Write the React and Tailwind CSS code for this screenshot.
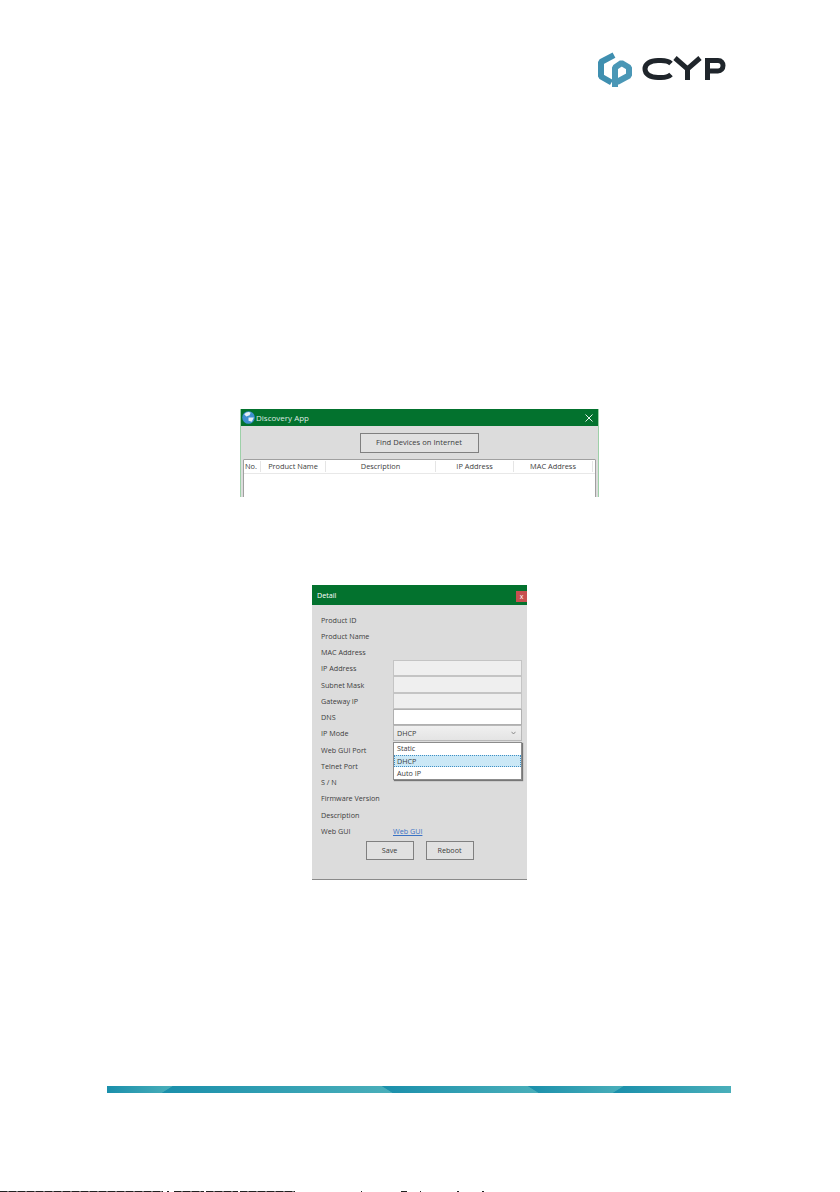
import React from 'react';

const labels = [
  'Product ID',
  'Product Name',
  'MAC Address',
  'IP Address',
  'Subnet Mask',
  'Gateway IP',
  'DNS',
  'IP Mode',
  'Web GUI Port',
  'Telnet Port',
  'S / N',
  'Firmware Version',
  'Description',
];

// [gap before, width] of the dark runs in the last row
const noise = [
  [0, 163],
  [4, 2],
  [5, 30],
  [2, 32],
  [2, 55],
  [66, 1],
  [39, 6],
  [13, 1],
  [36, 2],
  [23, 2],
];

const Logo = () => (
  <svg width="130" height="36" viewBox="0 0 130 36" fill="none">
    <path d="M16 3.2 L3 10 V24.5 L13.5 30.5" stroke="#3f8fb0" strokeWidth="6" strokeLinejoin="bevel" />
    <path d="M17 35 V15.5 L23.5 11 L31 15.5 V23.5 L19 30" stroke="#4a97b6" strokeWidth="6" strokeLinejoin="bevel" />
    <path
      d="M73 11.5 Q70 8.5 63 8.5 H60 C52 8.5 47 12 47 17 C47 22 52 25.5 60 25.5 H63 Q70 25.5 73 22.5"
      stroke="#1f252b"
      strokeWidth="5"
    />
    <path d="M77 6 L89.5 17 L102 6 M89.5 16 V28" stroke="#1f252b" strokeWidth="5" />
    <path d="M109.5 28 V8.5 H120 C123.5 8.5 125 11 125 13.5 C125 16.5 123 19 120 19 H112" stroke="#1f252b" strokeWidth="5" />
  </svg>
);

const Globe = () => (
  <svg width="13" height="13" viewBox="0 0 12 12">
    <circle cx="6" cy="6" r="5.8" fill="#3f8fd0" />
    <path d="M2 3 Q5 0 8 1.5 L7 4 L4 5 Z M6 6 L11 6 L9 10 L6 9 Z" fill="#e4eef5" />
  </svg>
);

const FooterBar = () => (
  <svg width="624" height="7" viewBox="0 0 624 7" className="block">
    <defs>
      <linearGradient id="a">
        <stop offset="0" stopColor="#1a8fab" />
        <stop offset="1" stopColor="#4aafba" />
      </linearGradient>
    </defs>
    <rect width="624" height="7" fill="#1a8fab" />
    <polygon points="0,0 66,0 55,7 0,7" fill="url(#a)" />
    <polygon points="66,0 275,0 286,7 55,7" fill="url(#a)" />
    <polygon points="275,0 421,0 432,7 286,7" fill="url(#a)" />
    <polygon points="421,0 517,0 506,7 432,7" fill="url(#a)" />
    <polygon points="517,0 624,0 624,7 506,7" fill="url(#a)" />
  </svg>
);

export default function App() {
  return (
    <div
      className="flex h-[1192px] w-[840px] flex-col overflow-hidden bg-white text-[7.2px] text-[#3c3c3c]"
      style={{ fontFamily: '"Open Sans", "Noto Sans", sans-serif' }}
    >
      <div className="flex justify-end pt-[52px] pr-[112px]">
        <Logo />
      </div>

      {/* Discovery App window, cut off at the bottom */}
      <div className="mt-[321px] ml-[240px] h-[88px] w-[359px] overflow-hidden border-x border-[#9dd0a8] bg-[#dcdcdc]">
        <div className="flex h-[17px] items-center justify-between bg-[#03722e] pr-[5px] pl-px text-[8px] text-[#dfe9e2]">
          <div className="flex items-center gap-[1px]">
            <Globe />
            <span>Discovery App</span>
          </div>
          <svg width="8" height="8" viewBox="0 0 8 8" stroke="#fff" strokeWidth="0.9">
            <path d="M0.5 0.5 L7.5 7.5 M7.5 0.5 L0.5 7.5" />
          </svg>
        </div>
        <div className="flex justify-center pt-[7px] pr-[1px]">
          <div className="flex h-[20px] w-[119px] items-center justify-center border border-[#808080] bg-[#e1e1e1] text-[7.6px]">
            Find Devices on Internet
          </div>
        </div>
        <div className="mx-[2px] mt-[6px] h-[60px] rounded-t-[1px] border border-[#a0a0a0] bg-white">
          <div className="flex h-[14px] items-center border-b border-[#e8e8e8] text-[7.4px]">
            <div className="w-[17px] border-r border-[#e5e5e5] pl-[1px]">No.</div>
            <div className="w-[65px] border-r border-[#e5e5e5] text-center">Product Name</div>
            <div className="w-[110px] border-r border-[#e5e5e5] text-center">Description</div>
            <div className="w-[78px] border-r border-[#e5e5e5] text-center">IP Address</div>
            <div className="w-[79px] border-r border-[#e5e5e5] text-center">MAC Address</div>
          </div>
        </div>
      </div>

      {/* Detail window */}
      <div className="mt-[88px] ml-[312px] h-[295px] w-[215px] border-b border-[#8a8a8a] bg-[#dcdcdc]">
        <div className="flex h-[20px] items-start justify-between bg-[#03722e] pl-[5px] text-white">
          <span className="leading-[20px]">Detail</span>
          <div className="mt-[6px] flex h-[11px] w-[11px] items-center justify-center bg-[#c75050] text-[7px] leading-none">
            x
          </div>
        </div>
        <div className="relative flex pt-[7px] pl-[9px]">
          <div className="flex w-[72px] flex-col">
            {labels.map((label) => (
              <div key={label} className="flex h-[16.25px] items-center whitespace-nowrap">
                {label}
              </div>
            ))}
            <div className="flex h-[16.25px] items-center">Web GUI</div>
          </div>
          <div className="flex w-[129px] flex-col pt-[48px]">
            <div className="h-[16.25px] border border-[#c4c4c4] bg-[#efefef]" />
            <div className="h-[16.25px] border border-[#c4c4c4] bg-[#efefef]" />
            <div className="h-[16.25px] border border-[#c4c4c4] bg-[#efefef]" />
            <div className="h-[16.25px] border border-[#b0b0b0] bg-white" />
            <div className="flex h-[16.25px] items-center justify-between border border-[#b8b8b8] bg-gradient-to-b from-[#f0f0f0] to-[#e4e4e4] pr-[5px] pl-[3px]">
              <span>DHCP</span>
              <svg width="5" height="4" viewBox="0 0 5 4" fill="none" stroke="#777" strokeWidth="0.8">
                <path d="M0.5 0.8 L2.5 3 L4.5 0.8" />
              </svg>
            </div>
            <div className="mt-[81.5px] leading-[16px] text-[#3a72c4] underline">Web GUI</div>
          </div>
          {/* open IP Mode list */}
          <div className="absolute top-[137px] left-[81px] flex h-[38px] w-[129px] flex-col border border-[#8c8c8c] bg-white shadow-[1px_1px_1px_#777]">
            <div className="flex h-[12px] items-center pl-[3px]">Static</div>
            <div className="flex h-[12.5px] items-center border border-dotted border-[#3f8fc4] bg-[#cbe8f6] pl-[2px]">
              DHCP
            </div>
            <div className="flex h-[12px] items-center pl-[3px]">Auto IP</div>
          </div>
        </div>
        <div className="mt-[1.5px] flex justify-center gap-[12px]">
          <div className="flex h-[19px] w-[48px] items-center justify-center border border-[#808080] bg-[#e1e1e1]">
            Save
          </div>
          <div className="flex h-[19px] w-[48px] items-center justify-center border border-[#808080] bg-[#e1e1e1]">
            Reboot
          </div>
        </div>
      </div>

      <div className="mt-[206px] ml-[107px]">
        <FooterBar />
      </div>

      {/* scan noise along the last row */}
      <div className="mt-auto flex h-px">
        {noise.map(([gap, width], i) => (
          <div
            key={i}
            className="h-px bg-[repeating-linear-gradient(90deg,#222_0,#222_7px,#777_7px,#777_9px)]"
            style={{ marginLeft: gap, width }}
          />
        ))}
      </div>
    </div>
  );
}
